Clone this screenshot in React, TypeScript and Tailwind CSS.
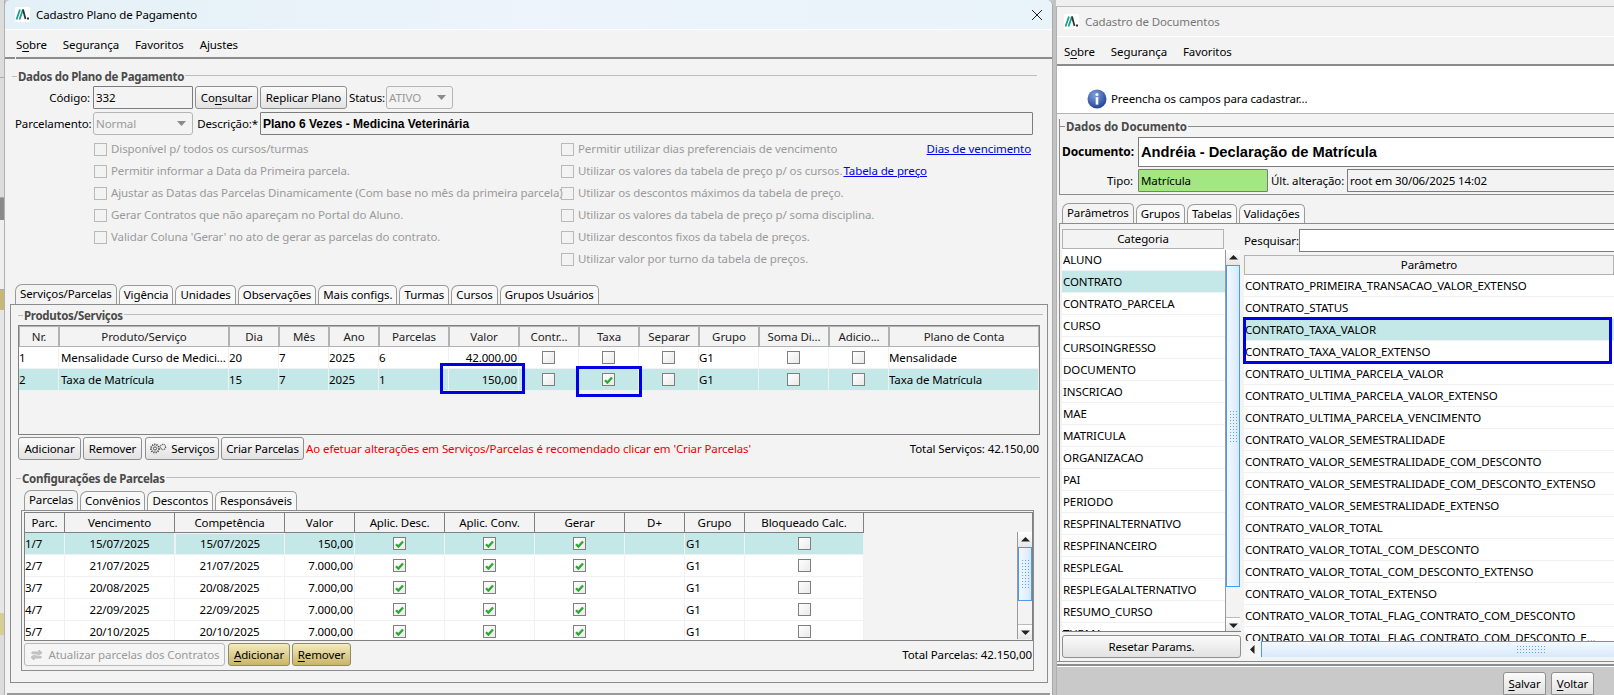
import React from "react";

const TEAL = "bg-[#c4e8e8]";

function Logo() {
  return (
    <svg width="15" height="15" viewBox="0 0 15 15" className="shrink-0 bg-white rounded-[2px]">
      <path d="M1.5 12.5 L5 2.5 M4.5 12.5 L8 2.5" stroke="#1aa08c" strokeWidth="1.8" fill="none" />
      <path d="M8 2.5 L10.5 12 M12 11.5 H14" stroke="#333" strokeWidth="1.8" fill="none" />
    </svg>
  );
}

function Mn({ a, m, b }: { a?: string; m: string; b?: string }) {
  return (
    <span>
      {a}
      <span className="underline underline-offset-2">{m}</span>
      {b}
    </span>
  );
}

function Menu({ h, items }: { h: string; items: React.ReactNode[] }) {
  return (
    <div className={`flex items-center ${h} pt-[3px] border-b-2 border-[#8c8c8c] bg-[#f3f3f3]`}>
      {items.map((it, i) => (
        <div key={i} className="mr-[16px]">
          {it}
        </div>
      ))}
    </div>
  );
}

function Legend({ title, className = "" }: { title: string; className?: string }) {
  return (
    <div className={`flex items-center h-[14px] ${className}`}>
      <div className="w-[5px] h-px bg-[#bdbdbd] shrink-0" />
      <div className="font-bold text-[#4a4a4a] text-[11.5px] leading-[14px] whitespace-nowrap px-[1px] tracking-[-0.3px] pt-[1px]">{title}</div>
      <div className="flex-1 h-px bg-[#bdbdbd] mt-[-1px]" />
    </div>
  );
}

function Btn({ children, className = "", gold, disabled }: { children: React.ReactNode; className?: string; gold?: boolean; disabled?: boolean }) {
  const tone = gold
    ? "bg-gradient-to-b from-[#f4ebbd] to-[#c9b568] border-[#8f8a6a]"
    : disabled
      ? "bg-[#f5f5f5] border-[#b9b9b9] text-[#9a9a9a]"
      : "bg-gradient-to-b from-[#fbfbfb] to-[#e2e2e2] border-[#8f8f8f]";
  return <div className={`flex items-center justify-center h-[23px] border rounded-[3px] whitespace-nowrap shrink-0 ${tone} ${className}`}>{children}</div>;
}

function Field({ children, className = "", disabled }: { children?: React.ReactNode; className?: string; disabled?: boolean }) {
  return <div className={`flex items-center h-[23px] border ${disabled ? "border-[#b5b5b5] text-[#9a9a9a]" : "border-[#7c7c7c]"} rounded-[1px] px-[2px] whitespace-nowrap shrink-0 ${className}`}>{children}</div>;
}

function Select({ value, className = "" }: { value: string; className?: string }) {
  return (
    <Field disabled className={`rounded-[3px] justify-between ${className}`}>
      <span>{value}</span>
      <svg width="9" height="5" viewBox="0 0 9 5" className="mr-[4px]">
        <path d="M0 0 H9 L4.5 5 Z" fill="#8a8a8a" />
      </svg>
    </Field>
  );
}

function Box({ checked, soft }: { checked?: boolean; soft?: boolean }) {
  return (
    <div className={`flex items-center justify-center w-[13px] h-[13px] border shrink-0 ${soft ? "border-[#b9b9b9]" : "border-[#7f7f7f] bg-gradient-to-br from-[#ffffff] to-[#eaeaea]"}`}>
      {checked && (
        <svg width="9" height="8" viewBox="0 0 9 8">
          <path d="M1 4.2 L3.4 6.6 L8 1.4" stroke="#2fa836" strokeWidth="2.3" fill="none" />
        </svg>
      )}
    </div>
  );
}

function CheckRow({ children }: { children: React.ReactNode }) {
  return (
    <div className="flex items-center h-[22px] gap-[4px] text-[#9a9a9a] whitespace-nowrap">
      <Box soft />
      <div>{children}</div>
    </div>
  );
}

function Tabs({ items, pl, className = "" }: { items: string[]; pl: string; className?: string }) {
  return (
    <div className={`flex items-end ${pl} ${className}`}>
      {items.map((t, i) => (
        <div
          key={t}
          className={`flex items-center justify-center border border-b-0 border-[#9a9a9a] rounded-tl-[7px] rounded-tr-[5px] mr-[2px] whitespace-nowrap px-[4px] ${
            i === 0 ? "h-[21px] bg-[#f3f3f3] mb-[-1px] relative pb-[3px]" : "h-[19px] bg-[#f8f8f8]"
          }`}
        >
          {t}
        </div>
      ))}
    </div>
  );
}

function Dotted({ className = "" }: { className?: string }) {
  return <div className={`bg-[radial-gradient(#59a6f2_0.7px,transparent_0.8px)] bg-[length:3px_3px] ${className}`} />;
}

function Arrow({ up, left }: { up?: boolean; left?: boolean }) {
  return (
    <svg width="9" height="9" viewBox="0 0 9 9">
      {left ? <path d="M6.5 0 V9 L2 4.5 Z" fill="#222" /> : up ? <path d="M0 6.5 H9 L4.5 2 Z" fill="#222" /> : <path d="M0 2.5 H9 L4.5 7 Z" fill="#222" />}
    </svg>
  );
}

function VScroll({ thumbH, trackH, dotted }: { thumbH: string; trackH: string; dotted: string }) {
  return (
    <div className="flex flex-col w-[15px] shrink-0 border-l border-[#9a9a9a] bg-[#f3f3f3]">
      <div className="flex items-center justify-center h-[15px] bg-gradient-to-b from-white to-[#e6e6e6]">
        <Arrow up />
      </div>
      <div className={`flex items-center justify-center ${thumbH} border border-[#4a9bf0] bg-gradient-to-r from-[#f3f9ff] to-[#d8e9fb]`}>
        <Dotted className={`w-[9px] ${dotted}`} />
      </div>
      <div className={`${trackH} bg-[#f3f3f3]`} />
      <div className="flex items-center justify-center h-[15px] bg-gradient-to-b from-white to-[#e6e6e6] border-t border-[#bbb]">
        <Arrow />
      </div>
    </div>
  );
}

const prodCols = "grid-cols-[40px_170px_50px_50px_50px_70px_70px_60px_60px_60px_60px_70px_60px_150px]";
const prodHead = ["Nr.", "Produto/Serviço", "Dia", "Mês", "Ano", "Parcelas", "Valor", "Contr...", "Taxa", "Separar", "Grupo", "Soma Di...", "Adicio...", "Plano de Conta"];

function ProdCell({ children, center, right }: { children?: React.ReactNode; center?: boolean; right?: boolean }) {
  return <div className={`flex items-center h-[22px] border-r border-b border-[#f1f1f1] px-[0px] whitespace-nowrap overflow-hidden ${center ? "justify-center" : right ? "justify-end pr-[1px]" : ""}`}>{children}</div>;
}

function ProdRow({ vals, taxa, sel }: { vals: string[]; taxa?: boolean; sel?: boolean }) {
  return (
    <div className={`grid ${prodCols} ${sel ? TEAL : "bg-white"}`}>
      <ProdCell>{vals[0]}</ProdCell>
      <ProdCell>
        <span className="pl-[2px]">{vals[1]}</span>
      </ProdCell>
      <ProdCell>{vals[2]}</ProdCell>
      <ProdCell>{vals[3]}</ProdCell>
      <ProdCell>{vals[4]}</ProdCell>
      <ProdCell>{vals[5]}</ProdCell>
      <ProdCell right>{vals[6]}</ProdCell>
      <ProdCell center>
        <Box />
      </ProdCell>
      <ProdCell center>
        <Box checked={taxa} />
      </ProdCell>
      <ProdCell center>
        <Box />
      </ProdCell>
      <ProdCell>{vals[7]}</ProdCell>
      <ProdCell center>
        <Box />
      </ProdCell>
      <ProdCell center>
        <Box />
      </ProdCell>
      <ProdCell>{vals[8]}</ProdCell>
    </div>
  );
}

const parcCols = "grid-cols-[40px_110px_110px_70px_90px_90px_90px_60px_60px_119px]";
const parcHead = ["Parc.", "Vencimento", "Competência", "Valor", "Aplic. Desc.", "Aplic. Conv.", "Gerar", "D+", "Grupo", "Bloqueado Calc."];
const parcRows = [
  ["1/7", "15/07/2025", "15/07/2025", "150,00"],
  ["2/7", "21/07/2025", "21/07/2025", "7.000,00"],
  ["3/7", "20/08/2025", "20/08/2025", "7.000,00"],
  ["4/7", "22/09/2025", "22/09/2025", "7.000,00"],
  ["5/7", "20/10/2025", "20/10/2025", "7.000,00"],
];

function ParcRow({ r, sel }: { r: string[]; sel?: boolean }) {
  const c = "flex items-center h-[22px] border-r border-b border-[#f1f1f1] whitespace-nowrap";
  return (
    <div className={`grid w-fit ${parcCols} ${sel ? TEAL : "bg-white"}`}>
      <div className={c}>{r[0]}</div>
      <div className={`${c} justify-center`}>{r[1]}</div>
      <div className={`${c} justify-center ${sel ? "border border-[#3b73c4]" : ""}`}>{r[2]}</div>
      <div className={`${c} justify-end pr-[1px]`}>{r[3]}</div>
      <div className={`${c} justify-center`}>
        <Box checked />
      </div>
      <div className={`${c} justify-center`}>
        <Box checked />
      </div>
      <div className={`${c} justify-center`}>
        <Box checked />
      </div>
      <div className={c} />
      <div className={`${c} pl-[1px]`}>G1</div>
      <div className={`${c} justify-center`}>
        <Box />
      </div>
    </div>
  );
}

const cats = ["ALUNO", "CONTRATO", "CONTRATO_PARCELA", "CURSO", "CURSOINGRESSO", "DOCUMENTO", "INSCRICAO", "MAE", "MATRICULA", "ORGANIZACAO", "PAI", "PERIODO", "RESPFINALTERNATIVO", "RESPFINANCEIRO", "RESPLEGAL", "RESPLEGALALTERNATIVO", "RESUMO_CURSO", "TURMA"];
const params = [
  "CONTRATO_PRIMEIRA_TRANSACAO_VALOR_EXTENSO",
  "CONTRATO_STATUS",
  "CONTRATO_TAXA_VALOR",
  "CONTRATO_TAXA_VALOR_EXTENSO",
  "CONTRATO_ULTIMA_PARCELA_VALOR",
  "CONTRATO_ULTIMA_PARCELA_VALOR_EXTENSO",
  "CONTRATO_ULTIMA_PARCELA_VENCIMENTO",
  "CONTRATO_VALOR_SEMESTRALIDADE",
  "CONTRATO_VALOR_SEMESTRALIDADE_COM_DESCONTO",
  "CONTRATO_VALOR_SEMESTRALIDADE_COM_DESCONTO_EXTENSO",
  "CONTRATO_VALOR_SEMESTRALIDADE_EXTENSO",
  "CONTRATO_VALOR_TOTAL",
  "CONTRATO_VALOR_TOTAL_COM_DESCONTO",
  "CONTRATO_VALOR_TOTAL_COM_DESCONTO_EXTENSO",
  "CONTRATO_VALOR_TOTAL_EXTENSO",
  "CONTRATO_VALOR_TOTAL_FLAG_CONTRATO_COM_DESCONTO",
  "CONTRATO_VALOR_TOTAL_FLAG_CONTRATO_COM_DESCONTO_E...",
];

function PlanoWindow() {
  return (
    <div className="flex flex-col w-[1048px] shrink-0 h-full bg-[#f3f3f3] rounded-t-[6px] overflow-hidden border-r border-[#a8a8a8]">
      <div className="flex items-center h-[30px] shrink-0 pl-[10px] pr-[9px] bg-gradient-to-r from-[#e4f0f7] via-[#edf4fb] to-[#e9f3fa] border-b border-white">
        <Logo />
        <div className="ml-[6px] flex-1">Cadastro Plano de Pagamento</div>
        <svg width="12" height="12" viewBox="0 0 12 12">
          <path d="M1 1 L11 11 M11 1 L1 11" stroke="#222" strokeWidth="1" />
        </svg>
      </div>
      <div className="pl-[11px]">
        <Menu h="h-[29px]" items={[<Mn a="S" m="o" b="bre" />, "Segurança", "Favoritos", "Ajustes"]} />
      </div>
      <div className="-mt-[2px] h-[2px] w-[10px] bg-[#8c8c8c] shrink-0" />

      <Legend title="Dados do Plano de Pagamento" className="mt-[10px] ml-[7px] mr-[15px]" />
      <div className="flex items-center mt-[3px] h-[23px] ml-[10px]">
        <div className="w-[75px] text-right mr-[3px]">Código:</div>
        <Field className="w-[100px]">332</Field>
        <Btn className="w-[63px] ml-[2px]">
          <Mn a="Co" m="n" b="sultar" />
        </Btn>
        <Btn className="w-[87px] ml-[2px]">Replicar Plano</Btn>
        <div className="ml-[2px] w-[36px]">Status:</div>
        <Select value="ATIVO" className="w-[67px] ml-[1px]" />
      </div>
      <div className="flex items-center mt-[3px] h-[23px] ml-[10px]">
        <div className="w-[75px] text-right mr-[3px]">Parcelamento:</div>
        <Select value="Normal" className="w-[100px]" />
        <div className="w-[65px] text-right mr-[2px]">Descrição:*</div>
        <Field className="w-[773px] font-['Liberation_Sans',sans-serif] font-bold text-[12px] tracking-[0px]">Plano 6 Vezes - Medicina Veterinária</Field>
      </div>

      <div className="flex mt-[3px] ml-[89px]">
        <div className="flex flex-col w-[467px] shrink-0">
          <CheckRow>Disponível p/ todos os cursos/turmas</CheckRow>
          <CheckRow>Permitir informar a Data da Primeira parcela.</CheckRow>
          <CheckRow>Ajustar as Datas das Parcelas Dinamicamente (Com base no mês da primeira parcela)</CheckRow>
          <CheckRow>Gerar Contratos que não apareçam no Portal do Aluno.</CheckRow>
          <CheckRow>Validar Coluna 'Gerar' no ato de gerar as parcelas do contrato.</CheckRow>
        </div>
        <div className="flex flex-col w-[470px] shrink-0">
          <div className="flex items-center justify-between">
            <CheckRow>Permitir utilizar dias preferenciais de vencimento</CheckRow>
            <a className="text-[#0000ee] underline">Dias de vencimento</a>
          </div>
          <div className="flex items-center">
            <CheckRow>Utilizar os valores da tabela de preço p/ os cursos.</CheckRow>
            <a className="text-[#0000ee] underline ml-[1px]">Tabela de preço</a>
          </div>
          <CheckRow>Utilizar os descontos máximos da tabela de preço.</CheckRow>
          <CheckRow>Utilizar os valores da tabela de preço p/ soma disciplina.</CheckRow>
          <CheckRow>Utilizar descontos fixos da tabela de preços.</CheckRow>
          <CheckRow>Utilizar valor por turno da tabela de preços.</CheckRow>
        </div>
      </div>

      <Tabs items={["Serviços/Parcelas", "Vigência", "Unidades", "Observações", "Mais configs.", "Turmas", "Cursos", "Grupos Usuários"]} pl="pl-[10px]" className="mt-[14px]" />
      <div className="relative ml-[5px] mr-[4px] h-[379px] shrink-0 border border-[#8c8c8c] px-[7px] pt-[3px]">
        <Legend title="Produtos/Serviços" className="ml-0 mr-[-3px]" />
        <div className="mt-[3px] h-[110px] border border-[#808080] bg-[#f3f3f3]">
          <div className={`grid ${prodCols} h-[21px]`}>
            {prodHead.map((h) => (
              <div key={h} className="flex items-center justify-center border border-[#b2b2b2] bg-[#f3f3f3] whitespace-nowrap text-[#222] overflow-hidden">
                {h}
              </div>
            ))}
          </div>
          <ProdRow vals={["1", "Mensalidade Curso de Medici...", "20", "7", "2025", "6", "42.000,00", "G1", "Mensalidade"]} />
          <ProdRow sel taxa vals={["2", "Taxa de Matrícula", "15", "7", "2025", "1", "150,00", "G1", "Taxa de Matrícula"]} />
        </div>
        <div className="absolute left-[429px] top-[58px] w-[85px] h-[31px] border-[3px] border-[#0000e6]" />
        <div className="absolute left-[565px] top-[61px] w-[66px] h-[31px] border-[3px] border-[#0000e6]" />

        <div className="flex items-center mt-[2px] h-[23px]">
          <Btn className="w-[63px]">Adicionar</Btn>
          <Btn className="w-[59px] ml-[2px]">Remover</Btn>
          <Btn className="w-[74px] ml-[3px] gap-[4px]">
            <svg width="18" height="11" viewBox="0 0 18 11">
              <circle cx="6" cy="5.5" r="4" fill="none" stroke="#444" strokeWidth="1.8" strokeDasharray="1.2 1" />
              <circle cx="6" cy="5.5" r="1.6" fill="none" stroke="#555" />
              <circle cx="14" cy="4" r="2.6" fill="none" stroke="#555" strokeWidth="1.3" strokeDasharray="1 0.8" />
            </svg>
            Serviços
          </Btn>
          <Btn className="w-[83px] ml-[2px]">Criar Parcelas</Btn>
          <div className="ml-[2px] text-[#ee0000] whitespace-nowrap">Ao efetuar alterações em Serviços/Parcelas é recomendado clicar em 'Criar Parcelas'</div>
          <div className="ml-auto mr-[1px] whitespace-nowrap">Total Serviços: 42.150,00</div>
        </div>

        <Legend title="Configurações de Parcelas" className="mt-[11px] ml-[-2px] mr-[0px]" />
        <Tabs items={["Parcelas", "Convênios", "Descontos", "Responsáveis"]} pl="pl-[6px]" className="mt-[5px]" />
        <div className="relative ml-[3px] mr-[6px] h-[161px] border border-[#8c8c8c] pl-[2px] pr-[0px] pt-[1px]">
          <div className="flex h-[129px] border border-[#808080] bg-[#f3f3f3] overflow-hidden">
            <div className="flex-1 min-w-0">
              <div className={`grid w-fit ${parcCols} h-[20px]`}>
                {parcHead.map((h) => (
                  <div key={h} className="flex items-center justify-center border-r border-b border-[#808080] bg-[#f3f3f3] whitespace-nowrap">
                    {h}
                  </div>
                ))}
              </div>
              {parcRows.map((r, i) => (
                <ParcRow key={i} r={r} sel={i === 0} />
              ))}
            </div>
            <div className="flex flex-col">
              <div className="h-[19px] bg-[#f3f3f3]" />
              <VScroll thumbH="h-[54px]" trackH="h-[23px]" dotted="h-[30px]" />
            </div>
          </div>
          <div className="flex items-center mt-[2px] h-[23px]">
            <Btn disabled className="w-[201px] gap-[6px]">
              <svg width="13" height="14" viewBox="0 0 13 14">
                <path d="M2 6 V4 H9 V2 L12 4.8 L9 7 M11 8 V10 H4 V12 L1 9.3 L4 7" fill="#c4c4c4" stroke="#bbb" />
              </svg>
              Atualizar parcelas dos Contratos
            </Btn>
            <Btn gold className="w-[62px] ml-[3px]">
              <Mn m="A" b="dicionar" />
            </Btn>
            <Btn gold className="w-[59px] ml-[2px]">
              <Mn m="R" b="emover" />
            </Btn>
            <div className="ml-auto mr-[1px] whitespace-nowrap">Total Parcelas: 42.150,00</div>
          </div>
        </div>
      </div>
      <div className="mt-[10px] border-t-2 border-[#9a9a9a] h-[3px] ml-[2px] mr-[2px] bg-[#e8e8e8]" />
    </div>
  );
}

function DocWindow() {
  return (
    <div className="flex flex-col flex-1 min-w-0 h-full overflow-hidden">
      <div className="h-[7px] shrink-0 bg-[#efefef] border-b border-[#bcbcbc]" />
      <div className="flex flex-col flex-1 min-h-0 bg-[#f3f3f3] border-l border-[#b0b0b0]">
        <div className="flex items-center h-[30px] shrink-0 pl-[7px] border-b border-white text-[#777]">
          <Logo />
          <div className="ml-[6px]">Cadastro de Documentos</div>
        </div>
        <div className="pl-[7px]">
          <Menu h="h-[29px]" items={[<Mn a="S" m="o" b="bre" />, "Segurança", "Favoritos"]} />
        </div>
        <div className="-mt-[2px] h-[2px] w-[7px] bg-[#8c8c8c] shrink-0" />
        <div className="flex items-center h-[48px] shrink-0 bg-white border-b border-[#b5b5b5] pl-[30px] pt-[18px] gap-[4px]">
          <svg width="20" height="20" viewBox="0 0 20 20" className="shrink-0">
            <defs>
              <radialGradient id="ig" cx="0.4" cy="0.3" r="0.8">
                <stop offset="0" stopColor="#7fa4dd" />
                <stop offset="1" stopColor="#16358f" />
              </radialGradient>
            </defs>
            <circle cx="10" cy="10" r="9.5" fill="url(#ig)" />
            <circle cx="10" cy="5.6" r="1.5" fill="#fff" />
            <rect x="8.7" y="8.2" width="2.6" height="7.4" fill="#fff" />
          </svg>
          <div>Preencha os campos para cadastrar...</div>
        </div>

        <div className="mt-[5px] ml-[2px] h-[76px] shrink-0 border-l border-r-0 border-b border-[#8c8c8c]">
          <div className="flex items-center h-[14px]">
            <div className="w-[5px] h-px bg-[#8c8c8c]" />
            <div className="font-bold text-[#4a4a4a] text-[11.5px] tracking-[-0.1px] px-[1px] pt-[1px] whitespace-nowrap">Dados do Documento</div>
            <div className="flex-1 h-px bg-[#8c8c8c]" />
          </div>
          <div className="flex items-center mt-[4px] h-[30px]">
            <div className="w-[74px] text-right font-bold mr-[4px] text-[12px] whitespace-nowrap">Documento:</div>
            <div className="flex items-center flex-1 h-[30px] bg-white border border-r-0 border-[#7c7c7c] pl-[2px] font-['Liberation_Sans',sans-serif] font-bold text-[14.7px] tracking-[0px]">Andréia - Declaração de Matrícula</div>
          </div>
          <div className="flex items-center mt-[2px] h-[23px]">
            <div className="w-[73px] text-right mr-[5px]">Tipo:</div>
            <Field className="w-[130px] bg-[#a3e783]">Matrícula</Field>
            <div className="ml-[3px] w-[76px] whitespace-nowrap">Últ. alteração:</div>
            <Field className="flex-1 min-w-0 border-r-0">root em 30/06/2025 14:02</Field>
          </div>
        </div>

        <Tabs items={["Parâmetros", "Grupos", "Tabelas", "Validações"]} pl="pl-[5px]" className="mt-[8px]" />
        <div className="relative flex flex-1 min-h-0 ml-[2px] border-t border-l border-[#8c8c8c] pt-[5px] pl-[2px]">
          <div className="flex flex-col w-[179px] shrink-0">
            <div className="flex h-[403px] overflow-hidden border-b border-[#808080] bg-[#f3f3f3]">
              <div className="w-[163px] shrink-0">
                <div className="flex items-center justify-center h-[20px] border border-[#b2b2b2] mr-[1px]">Categoria</div>
                {cats.map((c, i) => (
                  <div key={c} className={`flex items-center h-[22px] pl-[1px] border-b border-[#f1f1f1] ${i === 1 ? TEAL : "bg-white"}`}>
                    {c}
                  </div>
                ))}
              </div>
              <div className="flex flex-col pt-[21px]">
                <VScroll thumbH="h-[322px]" trackH="h-[30px]" dotted="h-[32px]" />
              </div>
            </div>
            <Btn className="h-[23px] mt-[3px]">Resetar Params.</Btn>
          </div>
          <div className="flex flex-col flex-1 min-w-0 ml-[3px]">
            <div className="flex items-center h-[23px]">
              <div className="w-[55px] whitespace-nowrap">Pesquisar:</div>
              <div className="flex-1 h-[23px] bg-white border border-r-0 border-[#7c7c7c]" />
            </div>
            <div className="mt-[3px] h-[386px] overflow-hidden">
              <div className="flex items-center justify-center h-[20px] border border-[#b2b2b2]">Parâmetro</div>
              {params.map((p, i) => (
                <div key={p} className={`flex items-center h-[22px] pl-[1px] border-b border-[#f1f1f1] whitespace-nowrap ${i === 2 ? TEAL : "bg-white"}`}>
                  {p}
                </div>
              ))}
            </div>
            <div className="flex h-[16px] shrink-0">
              <div className="flex items-center justify-center w-[17px] bg-[#f5f5f5]">
                <Arrow left />
              </div>
              <div className="flex flex-1 items-center justify-end pr-[68px] border-t border-l border-[#4a9bf0] bg-gradient-to-b from-[#f3f9ff] to-[#d8e9fb]">
                <Dotted className="w-[30px] h-[9px]" />
              </div>
            </div>
          </div>
          <div className="absolute left-[183px] top-[93px] w-[369px] h-[47px] border-[3px] border-[#0000e6]" />
        </div>
        <div className="h-[5px] shrink-0 bg-[#f3f3f3] border-t border-b-2 border-[#8c8c8c]" />
        <div className="flex items-end justify-end h-[29px] shrink-0 bg-[#c9c9c9] border-t border-white pr-[20px] gap-[5px]">
          <Btn className="w-[43px] h-[22px] rounded-b-none">
            <Mn m="S" b="alvar" />
          </Btn>
          <Btn className="w-[43px] h-[22px] rounded-b-none">
            <Mn m="V" b="oltar" />
          </Btn>
        </div>
      </div>
    </div>
  );
}

export default function App() {
  return (
    <div className="flex w-[1614px] h-[695px] overflow-hidden bg-[#c9c9c9] text-[11.5px] tracking-[-0.1px] leading-[16px] text-black font-['Noto_Sans',sans-serif]">
      <div className="flex flex-col w-[5px] shrink-0 bg-[#dcdcdc] border-r border-[#b0b0b0]">
        <div className="h-[78px] border-b border-[#aaa]" />
        <div className="h-[120px] border-b border-[#aaa]" />
        <div className="h-[22px] bg-[#8a8a8a]" />
        <div className="h-[70px] border-b border-[#aaa] bg-[#efefef]" />
        <div className="h-[20px] bg-[#c6b878]" />
        <div className="h-[303px] bg-[#e6e6e6]" />
        <div className="h-[22px] bg-[#d9cd96]" />
        <div className="flex-1" />
      </div>
      <PlanoWindow />
      <div className="w-[3px] shrink-0 bg-[#c2c2c2]" />
      <DocWindow />
    </div>
  );
}
